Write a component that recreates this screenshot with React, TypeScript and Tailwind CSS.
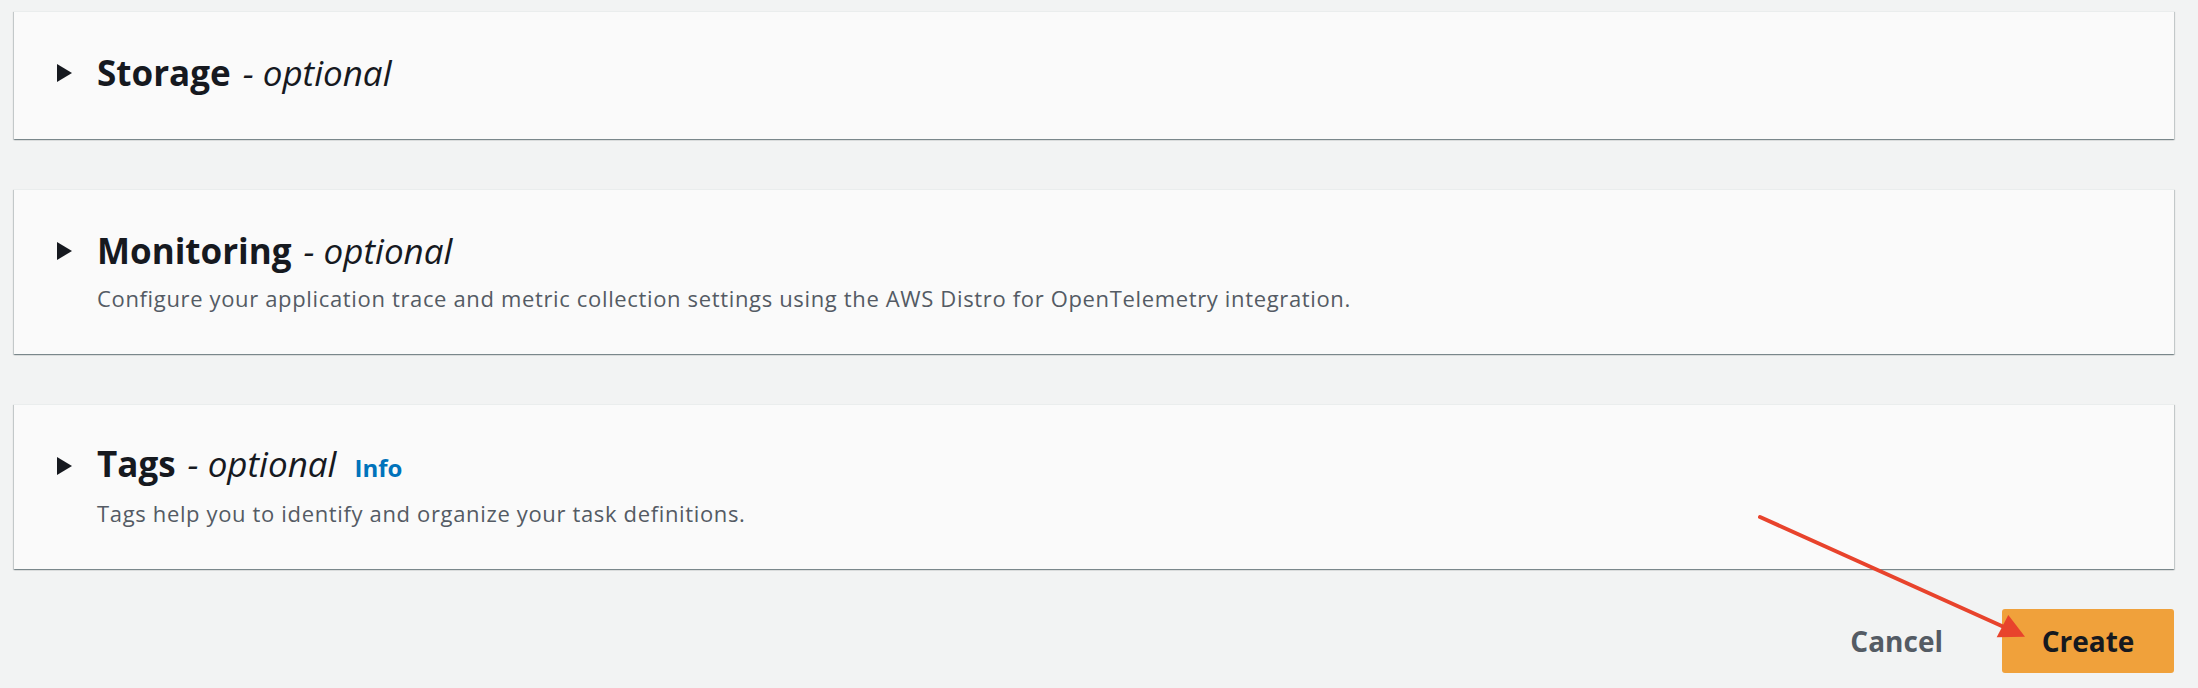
import React from "react";

type Section = {
  title: string;
  description?: string;
  info?: boolean;
};

const sections: Section[] = [
  { title: "Storage" },
  {
    title: "Monitoring",
    description:
      "Configure your application trace and metric collection settings using the AWS Distro for OpenTelemetry integration.",
  },
  {
    title: "Tags",
    description: "Tags help you to identify and organize your task definitions.",
    info: true,
  },
];

function Caret() {
  return (
    <svg width="15" height="18" viewBox="0 0 15 18" className="shrink-0">
      <polygon points="0,0 15,9 0,18" fill="#16191f" />
    </svg>
  );
}

function ExpandableCard({ section }: { section: Section }) {
  return (
    <div
      className={
        "bg-[#fafafa] border-t border-[#eaeded] shadow-[0_1px_1px_0_rgba(0,28,36,0.3),1px_1px_1px_0_rgba(0,28,36,0.15),-1px_1px_1px_0_rgba(0,28,36,0.15)] pl-[43px] pt-[39px] " +
        (section.description ? "pb-[42px]" : "pb-[44px]")
      }
    >
      <div className="flex items-center gap-[25px] h-[44px]">
        <Caret />
        <h2 className="flex items-baseline text-[35px] leading-[44px] text-[#16191f]">
          <span className="font-bold">{section.title}</span>
          <span className="ml-[12px] italic font-normal">- optional</span>
          {section.info && (
            <a className="ml-[18px] text-[24px] font-bold text-[#0073bb]">Info</a>
          )}
        </h2>
      </div>
      {section.description && (
        <p className="ml-[40px] mt-[11px] text-[22px] leading-[28px] tracking-[0.65px] text-[#545b64]">
          {section.description}
        </p>
      )}
    </div>
  );
}

export default function App() {
  return (
    <div
      className="relative w-full h-[688px] overflow-hidden bg-[#f2f3f3]"
      style={{ fontFamily: '"Open Sans", "Noto Sans", sans-serif' }}
    >
      <div className="flex flex-col gap-[50px] pl-[14px] pr-[24px] pt-[11px]">
        {sections.map((s) => (
          <ExpandableCard key={s.title} section={s} />
        ))}
      </div>

      <div className="flex justify-end items-center gap-[59px] pr-[24px] mt-[40px]">
        <button className="text-[28px] font-bold text-[#545b64]">Cancel</button>
        <button className="w-[172px] h-[64px] rounded-[3px] bg-[#f0a13b] text-[28px] font-bold text-[#16191f]">
          Create
        </button>
      </div>

      {/* annotation arrow */}
      <svg
        className="absolute left-0 top-0 pointer-events-none"
        width="2198"
        height="688"
        viewBox="0 0 2198 688"
      >
        <line x1="1760" y1="517" x2="2004" y2="627" stroke="#e8432c" strokeWidth="4" strokeLinecap="round" />
        <polygon points="1996.7,637.3 2008.3,615 2025,636.7" fill="#e8432c" />
      </svg>
    </div>
  );
}
